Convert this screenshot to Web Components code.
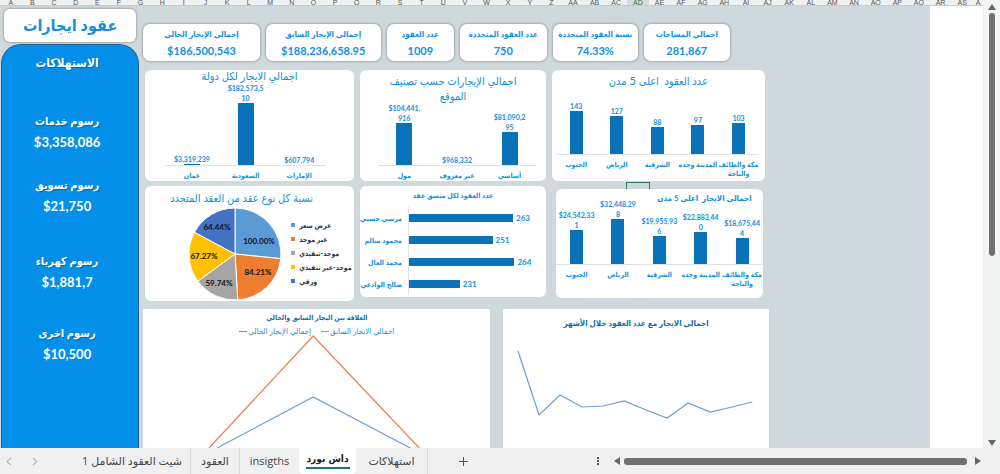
<!DOCTYPE html>
<html lang="ar">
<head>
<meta charset="utf-8">
<title>عقود ايجارات</title>
<style>
html, body { margin: 0; height: 100%; }
body { font-family: Lato, "DejaVu Sans Condensed", "DejaVu Sans", sans-serif; overflow: hidden; --sky: #1290e0; --bar: #0a72b8; color: var(--sky); }
</style>
</head>
<body>
<workbook-app></workbook-app>
<script>
class Base extends HTMLElement {
  connectedCallback() {
    if (this.shadowRoot) return;
    const t = document.createElement('template');
    t.innerHTML = '<style>*{box-sizing:border-box}:host([hidden]){display:none}' + this.css() + '</style>' + this.html();
    this.attachShadow({ mode: 'open' }).append(t.content.cloneNode(true));
  }
  a(n) { return this.getAttribute(n) || ''; }
  rows() { return this.a('data').split(';').map(r => r.split('|')); }
}

customElements.define('column-heads', class extends Base {
  css() { return `:host{display:grid;grid-template-columns:repeat(45,minmax(0,54fr)) minmax(0,25fr);height:6px;overflow:hidden;background:#f0f1f1;border-bottom:1px solid #c9cccd;color:#555}
    span{font:7px/6px "Liberation Sans",sans-serif;text-align:center;overflow:hidden;height:6px}
    .on{background:#d5dcda;color:#1f7a55;border-bottom:1px solid #1f7a55}`; }
  html() {
    let s = '';
    for (let i = 0; i < 46; i++) {
      const n = (i >= 26 ? 'A' : '') + String.fromCharCode(65 + i % 26);
      s += `<span${n === 'AD' ? ' class="on"' : ''}>${i === 45 ? 'A' : n}</span>`;
    }
    return s;
  }
});

customElements.define('fee-item', class extends Base {
  css() { return `:host{display:block;text-align:center;color:#fff;font-weight:700}
    .n{font-size:11px;line-height:20px;text-shadow:1px 1px 1px #0567a8}.v{font-size:13px;line-height:22px}`; }
  html() { return `<div class="n" dir="rtl"><slot></slot></div><div class="v">${this.a('value')}</div>`; }
});

customElements.define('side-panel', class extends Base {
  css() { return `:host{display:flex;flex-direction:column;padding:3px 0 0 1px;min-height:0}
    h1{margin:0 3px 2px;background:#fff;border-radius:6px;box-shadow:0 0 2px 1px #a4abb0;font-size:16px;line-height:31px;height:33px;text-align:center}
    section{flex:1;background:#0490ea;border:1px solid #24618c;border-bottom:0;border-radius:20px 20px 0 0;padding:8px 6px 0 0}
    h2{margin:0;color:#fff;font-size:12px;line-height:20px;text-align:center;text-shadow:1px 1px 1px #0567a8}
    fee-item{margin-top:22px}h2+fee-item{margin-top:38px}fee-item.far{margin-top:34px}fee-item:last-child{margin-top:30px}`; }
  html() { return `<h1 dir="rtl">عقود ايجارات</h1><section><h2 dir="rtl">الاستهلاكات</h2>
    <fee-item value="$3,358,086">رسوم خدمات</fee-item><fee-item value="$21,750">رسوم تسويق</fee-item>
    <fee-item class="far" value="$1,881,7">رسوم كهرباء</fee-item><fee-item value="$10,500">رسوم اخرى</fee-item></section>`; }
});

customElements.define('kpi-card', class extends Base {
  css() { return `:host{display:block;background:#fff;border-radius:7px;box-shadow:0 0 2px 1px #a4abb0;text-align:center;font-weight:700;height:37px;padding-top:2px;white-space:nowrap}
    .n{font-size:8px;line-height:16px}.v{font-size:11px;line-height:18px}`; }
  html() { return `<div class="n" dir="rtl"><slot></slot></div><div class="v">${this.a('value')}</div>`; }
});

customElements.define('column-chart', class extends Base {
  css() { return `:host{display:flex;flex-direction:column;background:#fff;border-radius:6px;position:relative;--w:13px;--l:4px;--r:6px;--foot:26px}
    h3{margin:0;padding-top:3px;font-weight:400;font-size:11px;line-height:15px;text-align:center;white-space:pre-line}
    :host([tight]) h3{padding-top:0;line-height:12px}
    :host([strong]) h3{font-weight:700;font-size:8px;text-align:right;padding:2px 11px 0 0}
    .plot{flex:1;min-height:0;display:flex;align-items:flex-end;margin:-40px var(--r) 0 var(--l);border-bottom:1px solid #dfe3e6}
    .c{flex:1;min-width:0;display:flex;flex-direction:column;align-items:center}
    .v{font-size:7px;font-weight:700;line-height:10px;white-space:pre;text-align:center}
    i{width:var(--w);background:var(--bar)}
    .cats{display:flex;margin:0 var(--r) 0 var(--l);height:var(--foot);padding-top:5px}
    .cats div{flex:1;min-width:0;display:flex;justify-content:center;font-size:7px;line-height:9px;font-weight:700;text-align:center;white-space:pre}`; }
  html() {
    const nl = s => s.replace(/\//g, '\n'), r = this.rows();
    return `<h3 dir="rtl">${nl(this.a('heading'))}</h3><div class="plot">` +
      r.map(([n, v, h]) => `<div class="c"><span class="v">${nl(v)}</span><i style="height:${h}px"></i></div>`).join('') +
      '</div><div class="cats">' + r.map(([n]) => `<div dir="rtl">${nl(n)}</div>`).join('') + '</div>';
  }
});

customElements.define('bar-chart', class extends Base {
  css() { return `:host{display:block;background:#fff;border-radius:6px}
    h3{margin:0;font-size:7px;line-height:18px;text-align:center}
    .p{display:grid;grid-template-columns:42px 1fr;column-gap:6px;margin-top:3px}
    .n{font-size:7px;font-weight:700;line-height:22px;white-space:nowrap;direction:rtl;display:flex;justify-content:flex-start}
    .b{display:flex;align-items:center;gap:3px;font-size:8px;font-weight:700;border-left:1px solid #dfe3e6;height:22px}
    i{height:8px;background:var(--bar)}`; }
  html() { return `<h3 dir="rtl">${this.a('heading')}</h3><div class="p">` +
    this.rows().map(([n, v, w]) => `<div class="n">${n}</div><div class="b"><i style="width:${w}%"></i>${v}</div>`).join('') + '</div>'; }
});

customElements.define('pie-chart', class extends Base {
  css() { return `:host{display:block;background:#fff;border-radius:6px}
    h3{margin:0;font-weight:400;font-size:11px;line-height:16px;padding:4px 16px 0 0;text-align:center}
    .r{display:flex;padding-left:42px;gap:7px}
    svg{flex:none;display:block}text{font:700 8px Lato,sans-serif;fill:#111;text-anchor:middle}
    ul{list-style:none;margin:0;padding:12px 0 0;flex:1;color:#333}
    li{display:flex;align-items:center;gap:4px;font-size:7px;font-weight:700;line-height:14px;white-space:nowrap}
    li i{width:4px;height:4px}`; }
  html() {
    const r = this.rows(), sum = r.reduce((s, x) => s + parseFloat(x[1]), 0), R = 46;
    let t = 0, p = '', l = '';
    for (const [n, v, c, x, y] of r) {
      const pt = q => `${(48 + R * Math.sin(q)).toFixed(2)} ${(48 - R * Math.cos(q)).toFixed(2)}`;
      const e = t + parseFloat(v) / sum * Math.PI * 2;
      p += `<path d="M48 48L${pt(t)}A${R} ${R} 0 0 1 ${pt(e)}Z" fill="${c}" stroke="#fff"/>`;
      l += `<text x="${x}" y="${y}">${v}</text>`;
      t = e;
    }
    return `<h3 dir="rtl">${this.a('heading')}</h3><div class="r"><svg width="97" height="95" viewBox="0 0 97 95">${p}${l}</svg><ul>` +
      r.map(([n, v, c]) => `<li><i style="background:${c}"></i><span dir="rtl">${n}</span></li>`).join('') + '</ul></div>';
  }
});

customElements.define('line-chart', class extends Base {
  css() { return `:host{display:flex;flex-direction:column;background:#fff;color:#0f6cad;overflow:hidden;min-height:0}
    h3{margin:0;font-size:7px;line-height:16px;text-align:center}
    :host([low]) h3{font-size:8px;line-height:28px}
    .l{display:flex;justify-content:center;gap:10px;height:12px;color:var(--sky);font-size:8px;line-height:14px}
    .l span{display:flex;align-items:center;gap:1px}.l i{width:8px;height:1px}.l b{font-weight:400}
    svg{display:block;width:100%;height:112px;overflow:visible}
    polyline{fill:none;vector-effect:non-scaling-stroke;stroke-width:1.2}`; }
  html() {
    const leg = this.a('legend') && this.a('legend').split(';').map(x => x.split('|'));
    return `<h3 dir="rtl">${this.a('heading')}</h3>` +
      (leg ? '<div class="l">' + leg.map(([n, c]) => `<span><i style="background:${c}"></i><b dir="rtl">${n}</b></span>`).join('') + '</div>' : '') +
      `<svg viewBox="${this.a('box')}" preserveAspectRatio="none" aria-hidden="true">` +
      this.rows().map(([c, p]) => `<polyline stroke="${c}" points="${p}"/>`).join('') + '</svg>';
  }
});

customElements.define('dash-board', class extends Base {
  css() { return `:host{display:block;padding-top:18px;min-height:0;min-width:0}
    .k{display:grid;grid-template-columns:minmax(0,116fr) minmax(0,114fr) minmax(0,67fr) minmax(0,86fr) minmax(0,85fr) minmax(0,85fr) minmax(0,33fr);gap:6px;margin-bottom:9px}
    .g{display:grid;grid-template-columns:minmax(0,209fr) minmax(0,186fr) minmax(0,213fr);gap:5px 6px;padding:0 4px 0 2px}
    .g>*{height:111px}.g pie-chart{height:115px}
    .s{position:relative;padding:3px 2px 0 4px;height:112px}.s column-chart{height:109px;--l:0px;--r:0px;--foot:33px}
    .s::before{content:"";position:absolute;left:35%;width:22px;height:6px;top:-4px;border:1px solid #2c7a63;border-bottom:0}
    .w{--w:16px;--l:20px;--r:28px;--foot:15px}.m{--w:16px;--l:18px;--r:10px;--foot:15px}
    .b{display:grid;grid-template-columns:minmax(0,347fr) minmax(0,265fr);gap:13px;margin-top:8px}
    .b>*{height:140px}`; }
  html() { return `<div class="k"><kpi-card value="$186,500,543">إجمالي الإيجار الحالي</kpi-card><kpi-card value="$188,236,658.95">إجمالي الإيجار السابق</kpi-card>
    <kpi-card value="1009">عدد العقود</kpi-card><kpi-card value="750">عدد العقود المتجددة</kpi-card><kpi-card value="74.33%">نسبة العقود المتجددة</kpi-card><kpi-card value="281,867">اجمالي المساحات</kpi-card></div>
    <div class="g"><column-chart class="w" tight heading="اجمالي الايجار لكل دولة" data="عمان|$3,319,239|1;السعودية|$182,573,5/10|62;الإمارات|$607,794|0"></column-chart>
    <column-chart class="m" heading="اجمالي الإيجارات حسب تصنيف/الموقع" data="مول|$104,441,/916|42;غير معروف|$968,332|0;أساسي|$81,090,2/95|33"></column-chart>
    <column-chart heading="عدد العقود &nbsp;اعلى 5 مدن" data="الجنوب|143|43;الرياض|127|38;الشرقية|88|27;المدينة وجده|97|29;مكة والطائف/والباحة|103|31"></column-chart>
    <pie-chart heading="نسبة كل نوع عقد من العقد المتجدد" data="عرض سعر|100.00%|#5b9bd5|72|38;غير موحد|84.21%|#ed7d31|71|69;موحد-تنفيذي|59.74%|#a5a5a5|32|80;موحد-غير تنفيذي|67.27%|#ffc000|17|53;ورقي|64.44%|#4472c4|30|24"></pie-chart>
    <bar-chart heading="عدد العقود لكل منسق عقد" data="مرسي حسني|263|76;محمود سالم|251|61;محمد العال|264|77;صالح الوادعي|231|37"></bar-chart>
    <div class="s"><column-chart strong heading="اجمالي الايجار &nbsp;اعلى 5 مدن" data="الجنوب|$24,542,33/1|34;الرياض|$32,448,29/8|45;الشرقية|$19,955,93/6|28;المدينة وجده|$22,883,44/0|32;مكة والطائف/والباحة|$18,675,44/4|26"></column-chart></div></div>
    <div class="b"><line-chart heading="العلاقة بين اليجار السابق والحالي" legend="إجمالي الإيجار الحالي|#5b9bd5;اجمالي الايجار السابق|#ed7d31" box="0 28 347 112" data="#e8834a|66,139 170,27 276,139;#6b9fd8|74,139 170,88 267,139"></line-chart>
    <line-chart low heading="اجمالي الايجار مع عدد العقود خلال الأشهر" box="0 28 265 112" data="#6b9fd8|15,42 36,106 57,86 79,98 100,97 121,92 143,101 164,109 185,94 207,103 229,98 249,93"></line-chart></div>`; }
});

customElements.define('scroll-track', class extends Base {
  css() { return `:host{display:flex;flex-direction:column;align-items:center;background:#f3f4f4;width:17px;padding:3px 0 1px}
    button{border:0;background:none;padding:0;width:8px;height:8px;display:flex;flex:none;align-items:center;justify-content:center}
    svg{display:block}
    .t{flex:1;display:flex;flex-direction:column;align-items:center;min-height:0;width:100%;padding-top:2px}
    .t i{width:6px;height:57%;background:#6f706f;border-radius:3px}
    :host([across]){flex-direction:row;width:auto;height:auto;background:none;padding:0}
    :host([across]) .t{padding:0 7px 0 3px}
    :host([across]) .t i{width:100%;height:7px}
    :host([across]) button svg{transform:rotate(-90deg)}`; }
  html() { return `<button aria-label="السابق"><svg width="8" height="6"><path d="M4 0L8 6H0Z" fill="#666"/></svg></button><div class="t"><i></i></div>
    <button aria-label="التالي"><svg width="8" height="6"><path d="M4 6L0 0H8Z" fill="#666"/></svg></button>`; }
});

customElements.define('sheet-tabs', class extends Base {
  css() { return `:host{display:flex;box-sizing:border-box;height:26px;padding-right:18px;background:#f0f0f1;font-family:"Open Sans","DejaVu Sans",sans-serif;color:#444}
    button{font:inherit;color:inherit;border:0;background:none;padding:0;margin:0}
    .l{display:flex;flex:595;min-width:0}.r{display:flex;flex:387;align-items:center;min-width:0}
    .a{width:26px;display:flex;align-items:center;padding-left:6px}
    .gap{width:22px}
    .tab{font-size:11px;line-height:26px;padding:0 8px;white-space:nowrap;border-right:1px solid #dcdcdc;display:flex;justify-content:center}
    .t1{width:117px}.t2{width:49px}.t3{width:59px;border-right:0}.t5{width:72px}
    .on{width:57px;background:#fff;color:#222;font-family:"DejaVu Sans Condensed","DejaVu Sans",sans-serif;font-weight:700;font-size:10px;border:0;border-radius:0 0 4px 4px;padding:2px 4px 0;line-height:17px}
    .on span{border-bottom:2px solid #1d7a52;height:19px;width:44px;display:flex;justify-content:center}
    .plus{width:70px;display:flex;align-items:center;justify-content:center}
    .dots{width:18px;height:26px;flex:none;display:flex;align-items:center;padding-left:1px}
    scroll-track{flex:1}`; }
  html() { return `<div class="l"><button class="a" aria-label="يسار"><svg width="6" height="9"><path d="M5 1L1 4.500L5 8" fill="none" stroke="#999"/></svg></button>
    <button class="a" aria-label="يمين"><svg width="6" height="9"><path d="M1 1L5 4.500L1 8" fill="none" stroke="#999"/></svg></button><span class="gap"></span>
    <button class="tab t1" dir="rtl">شيت العقود الشامل 1</button><button class="tab t2">العقود</button><button class="tab t3">insigths</button>
    <button class="tab on"><span>داش بورد</span></button><button class="tab t5">استهلاكات</button>
    <button class="plus" aria-label="ورقة جديدة"><svg width="9" height="9"><path d="M4.500 0V9M0 4.500H9" stroke="#555"/></svg></button></div>
    <div class="r"><button class="dots" aria-label="خيارات"><svg width="4" height="10"><path d="M1 1h2v2H1zM1 4h2v2H1zM1 7h2v2H1z" fill="#555"/></svg></button><scroll-track across></scroll-track></div>`; }
});

customElements.define('workbook-app', class extends Base {
  css() { return `:host{display:flex;flex-direction:column;height:100vh;background:#fff}
    .top{flex:1;display:flex;min-height:0}
    .sheet{flex:1;min-width:0;display:flex;flex-direction:column;background:#fff}
    .body{flex:1;min-height:0;display:grid;grid-template-columns:minmax(0,929fr) minmax(0,53fr);grid-template-rows:minmax(0,1fr)}
    .paper{display:grid;grid-template-columns:minmax(0,139fr) minmax(0,625fr) minmax(0,157fr);grid-template-rows:minmax(0,1fr);column-gap:4px;background:linear-gradient(90deg,#d0dadb,#cfd8dc 70%,#cfd8de);overflow:hidden}`; }
  html() { return `<div class="top"><div class="sheet"><column-heads></column-heads><div class="body"><div class="paper"><side-panel></side-panel><dash-board></dash-board></div></div></div><scroll-track></scroll-track></div><sheet-tabs></sheet-tabs>`; }
});
</script>
</body>
</html>
